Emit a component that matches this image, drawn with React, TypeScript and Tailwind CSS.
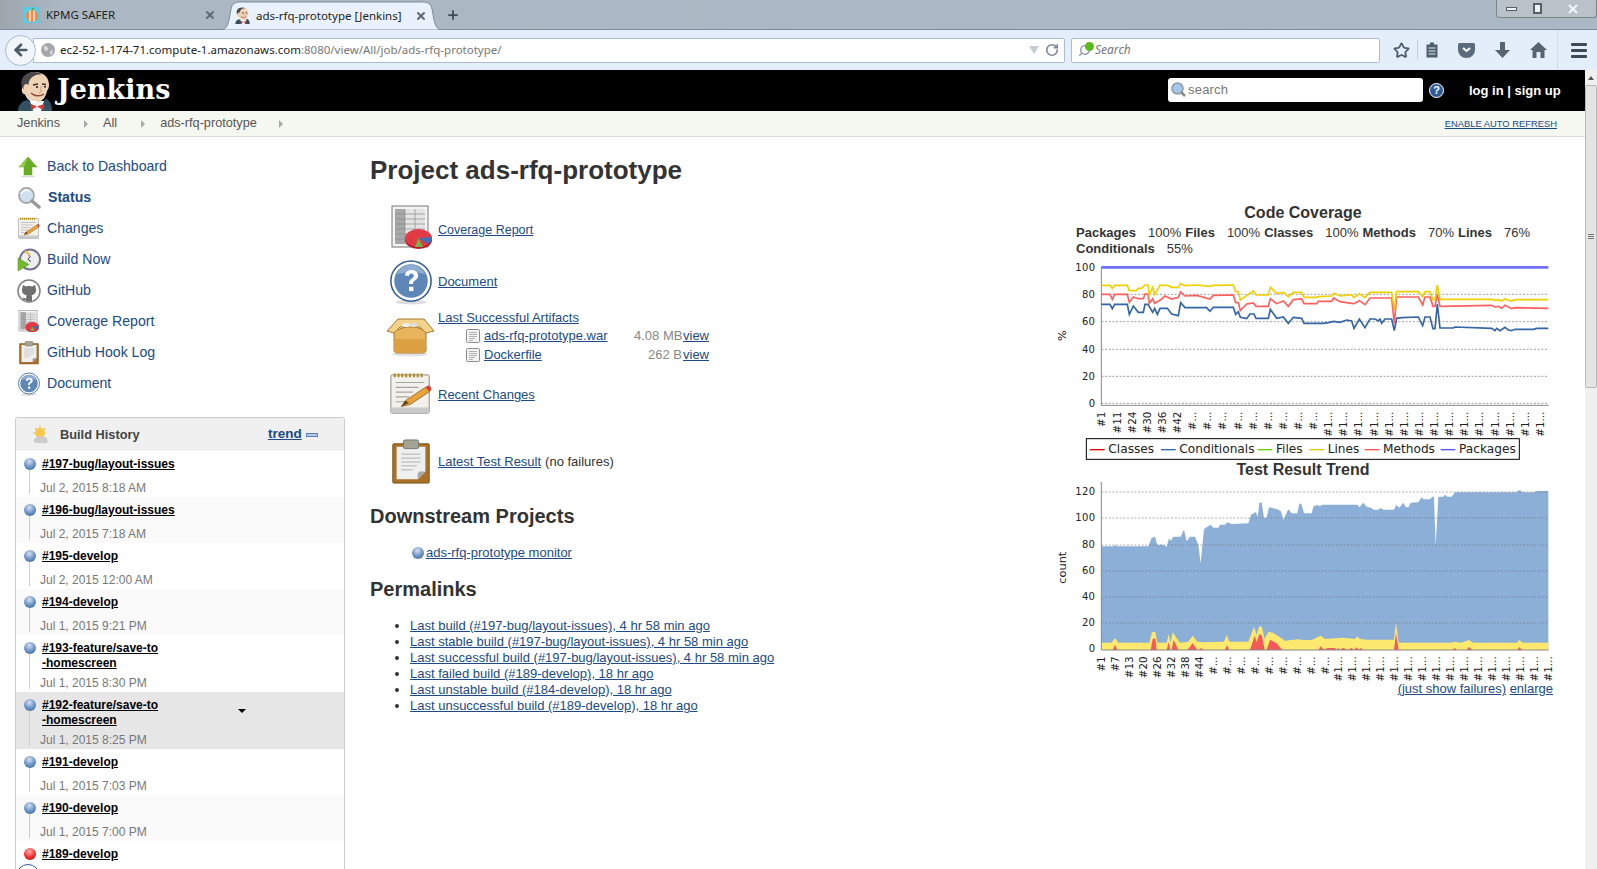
import React from 'react';
import { ArrowLeft, Plus, RotateCw, Search, Star, X } from 'lucide-react';

const sideLinks = [
  { label: 'Back to Dashboard', icon: 'up' },
  { label: 'Status', icon: 'search', bold: true },
  { label: 'Changes', icon: 'notepad' },
  { label: 'Build Now', icon: 'clock' },
  { label: 'GitHub', icon: 'github' },
  { label: 'Coverage Report', icon: 'coverage' },
  { label: 'GitHub Hook Log', icon: 'clipboard' },
  { label: 'Document', icon: 'help' },
];

const builds = [
  { name: '#197-bug/layout-issues', date: 'Jul 2, 2015 8:18 AM' },
  { name: '#196-bug/layout-issues', date: 'Jul 2, 2015 7:18 AM', alt: true },
  { name: '#195-develop', date: 'Jul 2, 2015 12:00 AM' },
  { name: '#194-develop', date: 'Jul 1, 2015 9:21 PM', alt: true },
  { name: '#193-feature/save-to\n-homescreen', date: 'Jul 1, 2015 8:30 PM' },
  { name: '#192-feature/save-to\n-homescreen', date: 'Jul 1, 2015 8:25 PM', hover: true },
  { name: '#191-develop', date: 'Jul 1, 2015 7:03 PM' },
  { name: '#190-develop', date: 'Jul 1, 2015 7:00 PM', alt: true },
  { name: '#189-develop', date: '', failed: true },
];

const permalinks = [
  'Last build (#197-bug/layout-issues), 4 hr 58 min ago',
  'Last stable build (#197-bug/layout-issues), 4 hr 58 min ago',
  'Last successful build (#197-bug/layout-issues), 4 hr 58 min ago',
  'Last failed build (#189-develop), 18 hr ago',
  'Last unstable build (#184-develop), 18 hr ago',
  'Last unsuccessful build (#189-develop), 18 hr ago',
];

// chart points, traced from the picture at 3x
const linesY = '154,271 180,271 187,280 194,271 232,271 238,287 258,287 265,280 275,280 285,270 294,270 298,300 308,277 314,298 330,271 352,271 365,277 385,277 392,266 405,272 440,270 480,274 490,271 550,270 557,290 565,290 571,315 590,302 610,288 618,300 655,300 661,277 680,295 700,292 715,305 730,292 755,292 762,307 800,307 805,305 845,303 851,295 870,303 905,299 912,308 928,296 945,308 960,292 1025,292 1033,345 1040,290 1105,290 1118,305 1125,290 1140,290 1149,315 1155,315 1162,270 1170,313 1325,313 1335,316 1345,314 1355,318 1365,312 1385,318 1395,314 1495,314';
const methodsY = '154,298 180,298 187,313 194,298 232,298 238,322 250,306 265,311 280,311 285,297 294,297 298,325 308,311 314,325 330,316 345,303 365,312 385,307 392,291 405,303 440,301 480,312 490,301 550,300 557,323 565,323 571,347 590,327 610,324 618,334 655,334 661,311 680,326 700,318 715,334 730,314 755,312 762,326 800,326 805,319 845,319 851,309 870,320 905,325 912,326 928,317 945,329 960,309 1025,309 1033,385 1040,306 1105,306 1118,330 1125,306 1140,306 1149,334 1155,334 1162,297 1170,334 1325,331 1335,336 1345,334 1355,340 1365,331 1385,341 1395,338 1495,340';
const condY = '154,328 180,328 187,341 194,328 232,328 238,358 250,333 265,352 280,352 285,328 294,328 308,352 314,340 322,358 330,340 352,340 365,357 385,362 392,323 405,338 470,338 480,349 490,337 550,337 557,358 565,350 571,367 590,371 600,357 612,357 618,370 655,370 661,343 680,370 700,366 715,385 730,367 755,370 762,385 820,385 835,383 851,379 870,382 890,375 905,378 912,400 928,372 945,398 960,372 975,372 985,378 990,372 995,385 1005,372 1025,372 1033,407 1040,370 1055,368 1105,366 1118,392 1125,366 1140,366 1149,401 1155,401 1162,327 1170,399 1210,399 1215,396 1325,400 1335,407 1340,400 1350,407 1365,397 1375,405 1385,407 1395,403 1450,403 1460,400 1495,400';
const blueTop = '154,287 190,287 195,283 200,287 295,287 305,262 315,258 322,282 340,282 350,288 357,263 362,270 370,258 392,258 402,237 410,272 420,258 435,258 445,283 452,338 462,235 482,222 490,231 505,231 510,222 525,222 532,215 545,220 595,218 603,192 618,184 623,200 628,157 635,155 642,202 650,200 657,170 680,175 693,182 700,208 715,176 725,188 742,188 748,158 755,162 762,188 785,188 790,168 800,163 810,166 818,162 922,162 928,170 940,156 950,168 965,172 970,177 985,177 992,172 1000,177 1032,177 1038,163 1048,171 1060,156 1068,170 1075,170 1082,156 1105,155 1115,140 1120,146 1140,146 1147,138 1152,138 1157,285 1165,138 1180,138 1185,132 1192,138 1205,138 1215,125 1400,125 1408,118 1418,125 1455,125 1460,121 1495,121';
const yellowTop = '154,576 185,576 195,562 205,576 298,576 306,545 316,543 322,576 350,576 356,550 362,576 368,545 378,560 390,576 415,573 428,555 442,573 460,575 522,573 530,553 538,573 595,573 612,528 620,553 628,525 636,530 644,565 655,543 668,546 690,560 705,570 745,566 760,568 785,568 812,555 825,565 880,561 915,565 922,557 930,565 950,567 1032,567 1038,515 1046,576 1205,576 1214,573 1235,576 1256,568 1270,576 1400,576 1408,568 1418,576 1495,576';
const redTop = '154,598 188,598 195,582 202,598 302,598 308,565 316,563 320,598 350,598 356,574 361,598 365,598 371,567 385,598 412,598 428,578 442,598 447,598 453,592 460,598 525,598 531,583 537,598 600,598 614,555 620,575 628,550 636,555 644,598 650,598 660,567 680,578 697,598 805,598 812,587 822,598 832,592 855,592 860,598 865,592 870,598 880,591 892,598 905,592 912,598 920,590 927,598 932,592 940,598 1032,598 1038,547 1046,598 1208,598 1214,592 1220,598 1250,598 1256,589 1268,598 1402,598 1408,589 1416,598';

function Ball({ failed }: { failed?: boolean }) {
  const tone = failed
    ? 'bg-[radial-gradient(circle_at_45%_30%,#ffb0b0,#ee2b2b_55%,#b81818)]'
    : 'bg-[radial-gradient(circle_at_45%_30%,#d5e0ef,#6f95c6_50%,#2f5c96)]';
  return <span className={`block shrink-0 rounded-full w-[12px] h-[12px] ${tone}`} />;
}

function HelpIcon({ size }: { size: number }) {
  return (
    <svg width={size} height={size} viewBox="0 0 48 48">
      <ellipse cx="24" cy="45" rx="16" ry="2.500" fill="#ddd" />
      <circle cx="24" cy="23" r="21" fill="#fff" stroke="#2f5c96" strokeWidth="1.600" />
      <circle cx="24" cy="23" r="17.500" fill="#5e87b8" />
      <path d="M24 6a17 17 0 0 1 15 10c-8-3-20-3-30 0A17 17 0 0 1 24 6z" fill="#8fadd0" />
      <path d="M17.500 17c1-4 3.500-5.500 7-5.500 4 0 7 2.500 7 6 0 4.500-5.500 4.500-5.500 8.500h-4c-.5-5.500 5-5.500 5-8.500 0-1.500-1-2.500-2.500-2.500s-2.500 1-3 3z" fill="#fff" />
      <rect x="22" y="29" width="4.500" height="4.500" fill="#fff" />
    </svg>
  );
}

function CoverageIcon({ size }: { size: number }) {
  return (
    <svg width={size} height={size} viewBox="0 0 48 48">
      <rect x="4" y="1" width="36" height="41" fill="#f4f4f4" stroke="#777" strokeWidth="1" />
      <rect x="7" y="4" width="30" height="35" fill="#e4e4e4" />
      <rect x="7" y="4" width="10" height="35" fill="#a8a8a8" />
      <path d="M7 9h30M7 14h30M7 19h30M7 24h30M7 29h30M7 34h30M17 4v35M27 4v35" stroke="#8a8a8a" strokeWidth=".7" />
      <ellipse cx="30.500" cy="35" rx="13.500" ry="9" fill="#b91c28" />
      <ellipse cx="30.500" cy="33" rx="13.500" ry="9" fill="#e23b45" />
      <path d="M30.500 33l13-1c.4 3-1 6-3.500 7z" fill="#3f6fb5" />
      <path d="M30.500 33l-3.500 9h8z" fill="#74b743" />
    </svg>
  );
}

function NotepadIcon({ size }: { size: number }) {
  return (
    <svg width={size} height={size} viewBox="0 0 48 48">
      <rect x="3" y="3" width="40" height="40" rx="1.500" fill="#f2f1ec" stroke="#888" strokeWidth="1" />
      <rect x="3" y="37" width="40" height="6" fill="#c9c9c9" />
      <path d="M7 1.500v4M11 1.500v4M15 1.500v4M19 1.500v4M23 1.500v4M27 1.500v4M31 1.500v4M35 1.500v4" stroke="#b08a14" strokeWidth="2" />
      <path d="M8 11h30M8 16h24M8 21h18M8 26h14M8 31h10" stroke="#a5a5a5" strokeWidth="1.200" />
      <path d="M14 36l4-6 21-14 5 4-21 14z" fill="#e8a33b" stroke="#8b5d16" strokeWidth=".8" />
      <path d="M39 16l3-2c2 0 4 3 3 5l-2 1z" fill="#d93a3a" />
      <path d="M14 36l4-6 4 2z" fill="#5a4020" />
    </svg>
  );
}

function ClipboardIcon({ size }: { size: number }) {
  return (
    <svg width={size} height={size} viewBox="0 0 48 48">
      <rect x="5" y="5" width="38" height="41" rx="1" fill="#a9722a" stroke="#7b5118" strokeWidth="1" />
      <path d="M9 8h30v26l-8 8H9z" fill="#efefef" />
      <path d="M31 42l8-8h-6l-2 2z" fill="#a8a8a8" />
      <path d="M14 16h20M14 20h20M14 24h20M14 28h16M14 32h12" stroke="#c6c6c6" strokeWidth="1.500" />
      <rect x="16" y="1" width="16" height="9" rx="2" fill="#a3a396" stroke="#74746a" strokeWidth="1" />
    </svg>
  );
}

function BoxIcon() {
  return (
    <svg width="48" height="40" viewBox="0 0 48 40">
      <ellipse cx="24" cy="37" rx="18" ry="2.500" fill="#e2e2e2" />
      <path d="M8 14l17-6 15 6v20l-2 2H10l-2-2z" fill="#e8b45c" stroke="#a87a2a" strokeWidth="1" />
      <path d="M8 22h32v12l-2 2H10l-2-2z" fill="#dc9f42" />
      <path d="M1 14L12 2h26l10 12-8 2-6-6H14l-6 6z" fill="#f3d28c" stroke="#a87a2a" strokeWidth="1" />
      <ellipse cx="20" cy="8" rx="4" ry="2" fill="#eee" />
      <ellipse cx="28" cy="8" rx="4" ry="2" fill="#ddd" />
    </svg>
  );
}

function FileIcon() {
  return (
    <svg width="14" height="14" viewBox="0 0 14 14" className="shrink-0">
      <rect x=".5" y=".5" width="13" height="13" rx="1" fill="#f4f4f4" stroke="#8c8c8c" />
      <path d="M3 3.500h8M3 5.500h8M3 7.500h8M3 9.500h6M3 11.500h4" stroke="#b0b0b0" strokeWidth="1" />
    </svg>
  );
}

function SideIcon({ name }: { name: string }) {
  if (name === 'up') {
    return (
      <svg width="22" height="22" viewBox="0 0 22 22">
        <path d="M11 1l9 10h-5v8H7v-8H2z" fill="#67ad24" stroke="#5c9a20" strokeWidth=".5" />
        <path d="M11 1L2 11h5z" fill="#8fce45" />
        <ellipse cx="11" cy="20.500" rx="7" ry="1" fill="#ddd" />
      </svg>
    );
  }
  if (name === 'search') {
    return (
      <svg width="24" height="24" viewBox="0 0 24 24">
        <circle cx="9.500" cy="9.500" r="7.500" fill="#cfe0f2" stroke="#a6a6a6" strokeWidth="1.800" />
        <path d="M4 8a6 6 0 0 1 9-3" stroke="#fff" strokeWidth="1.500" fill="none" />
        <path d="M15 15l7 6" stroke="#999" strokeWidth="3.500" strokeLinecap="round" />
      </svg>
    );
  }
  if (name === 'notepad') return <NotepadIcon size={24} />;
  if (name === 'clock') {
    return (
      <svg width="24" height="24" viewBox="0 0 24 24">
        <circle cx="13" cy="11.500" r="10" fill="#eee" stroke="#77708f" strokeWidth="2" />
        <path d="M9 3.500l4 5-2 3 3 2" stroke="#444" strokeWidth="1" fill="none" />
        <path d="M8 3l5 4" stroke="#e9c33c" strokeWidth="2" />
        <path d="M1 10l11 6.500L1 23z" fill="#74bb2c" stroke="#4e8e1c" strokeWidth=".5" />
      </svg>
    );
  }
  if (name === 'github') {
    return (
      <svg width="24" height="24" viewBox="0 0 24 24">
        <circle cx="12" cy="12" r="11" fill="#fff" stroke="#808080" strokeWidth="1.500" />
        <path d="M5 10l1-4 3 1.500c2-.6 4-.6 6 0L18 6l1 4c.6 3-1.500 6-4.500 6.300.5.500.5 1.500.5 2.500v3.500H9V21c-2 .3-3-.5-3.500-2H7.800c.5.800 1 1 1.300.6 0-1.500.2-2.600.6-3.300C6.500 16 4.500 13 5 10z" fill="#707070" />
      </svg>
    );
  }
  if (name === 'coverage') return <CoverageIcon size={24} />;
  if (name === 'clipboard') return <ClipboardIcon size={24} />;
  return <HelpIcon size={24} />;
}

function JenkinsHead({ size }: { size: number }) {
  return (
    <svg width={size} height={size} viewBox="0 0 40 40">
      <path d="M3 40c0-6 4-10 9-11l5 2h10l4-3c4 1 6 6 6 12z" fill="#335061" />
      <path d="M15 30h14l-3 10h-8z" fill="#f4f4f4" />
      <path d="M16 33l6 2.500-6 4zM29 33l-7 2.500 7 4z" fill="#d33833" />
      <path d="M7 14C7 6 12 1 20 1c8 0 14 5 14 13 0 3-1 4-2 6-1 5-4 11-10 11-5 0-8-3-10-7-3 0-6-2-5-7z" fill="#f0d2b4" />
      <path d="M7 16C4 8 10 1 19 1c3 0 6 .8 8 2.200C20 3 14 6 13.500 14c-2-2-5-1-5 2.500l.5 2z" fill="#49484a" />
      <path d="M18 14l5-1M27 13l4 .5" stroke="#3b3330" strokeWidth="1.400" />
      <circle cx="22" cy="16" r="1.100" fill="#222" />
      <path d="M29 15.500l2 .5" stroke="#222" strokeWidth="1.300" />
      <path d="M26 15v6l-2 1" stroke="#c99c80" strokeWidth="1" fill="none" />
      <path d="M16 22c3 3 9 4 13 1" stroke="#8c4a38" strokeWidth="1.400" fill="none" />
      <path d="M11 24c2 4 6 7 11 7" stroke="#fff" strokeWidth="1.600" fill="none" />
    </svg>
  );
}

function Sep() {
  return <span className="inline-block w-0 h-0 border-y-[4px] border-y-transparent border-l-[4px] border-l-[#aaa]" />;
}

function TabShape() {
  return (
    <svg className="absolute -left-[5px] -right-[5px] top-0 w-[225px] h-full" viewBox="0 0 225 29" preserveAspectRatio="none">
      <path d="M0 29c6 0 8-2 10-10l2-11c1-5 4-7 9-7h183c5 0 8 2 9 7l2 11c2 8 4 10 10 10z" fill="#e9f1fc" stroke="#7d8a99" strokeWidth="1" />
    </svg>
  );
}

function BrowserChrome() {
  return (
    <div className="shrink-0">
      {/* tabs */}
      <div className="h-[30px] flex items-end bg-[linear-gradient(90deg,#9ea6ad_0,#abb7c3_60px,#aab8c6_100%)] border-b border-[#7d8a99] text-[#222] font-['Noto_Sans',sans-serif] relative">
        <div className="w-[224px] h-[28px] flex items-center pl-[24px] pr-[8px]">
          <svg width="16" height="16" viewBox="0 0 16 16" className="shrink-0">
            <rect width="16" height="16" fill="#58cbe6" />
            <circle cx="8" cy="9" r="6" fill="#f08a4b" />
            <path d="M6 3.500v11M10 3.500v11" stroke="#fde7d5" strokeWidth="1.500" />
            <path d="M8 3l2-2" stroke="#6a9e2a" strokeWidth="1.500" />
          </svg>
          <span className="ml-[6px] flex-1 text-[11.500px]">KPMG SAFER</span>
          <X size={12} strokeWidth={4} className="text-[#5f6b78]" />
        </div>
        <div className="relative w-[215px] h-[29px] -mb-px flex items-center pl-[10px] pr-[12px]">
          <TabShape />
          <span className="relative"><JenkinsHead size={17} /></span>
          <span className="relative ml-[5px] flex-1 text-[11.500px] whitespace-nowrap">ads-rfq-prototype [Jenkins]</span>
          <X size={12} strokeWidth={4} className="relative text-[#5f6b78]" />
        </div>
        <Plus size={14} strokeWidth={3} className="ml-[7px] mb-[7px] text-[#3f4b59]" />
        <div className="absolute right-0 top-0 w-[101px] h-[18px] flex items-center rounded-b-[4px] border border-t-0 border-[#7d8486] bg-[#b9c2c9]">
          <span className="w-[28px] flex justify-center"><span className="w-[11px] h-[4px] bg-[#eef2f5] border border-[#56606a]" /></span>
          <span className="w-[24px] flex justify-center"><span className="w-[9px] h-[11px] bg-[#eef2f5] border-2 border-[#56606a]" /></span>
          <span className="flex-1 flex justify-center"><X size={14} strokeWidth={3.500} className="text-[#f4f6f8]" /></span>
        </div>
      </div>
      {/* location bar */}
      <div className="h-[40px] flex items-center bg-[#e4eefa] relative text-[#4e5d6c]">
        <span className="ml-[5px] w-[31px] h-[31px] rounded-full bg-[#f2f6fb] border border-[#a9bace] flex items-center justify-center z-10">
          <ArrowLeft size={18} strokeWidth={3.500} className="text-[#4a5868]" />
        </span>
        <div className="-ml-[3px] w-[1032px] h-[25px] bg-white border border-[#aebdcd] rounded-r-[2px] flex items-center pl-[7px] pr-[5px]">
          <svg width="14" height="14" viewBox="0 0 14 14" className="shrink-0">
            <circle cx="7" cy="7" r="7" fill="#a3a7ab" />
            <path d="M3 3c2-1 3 1 4 2s-1 3-2 3-2-2-2-5zM9 8l3-1-1 4-2 1z" fill="#d8dadc" />
          </svg>
          <span className="ml-[5px] text-[11.500px] font-['Noto_Sans',sans-serif] whitespace-nowrap">
            <span className="text-[#222]">ec2-52-1-174-71.compute-1.amazonaws.com</span>
            <span className="text-[#777]">:8080/view/All/job/ads-rfq-prototype/</span>
          </span>
          <span className="ml-auto w-0 h-0 border-x-[5px] border-x-transparent border-t-[8px] border-t-[#c4ccd4]" />
          <RotateCw size={14} strokeWidth={2.800} className="ml-[6px] text-[#7c8893]" />
        </div>
        <div className="ml-[6px] w-[309px] h-[25px] bg-white border border-[#aebdcd] rounded-[2px] flex items-center pl-[6px] relative">
          <Search size={13} strokeWidth={2.500} className="text-[#8893a0] -scale-x-100" />
          <span className="absolute left-[13px] top-[3px] w-[9px] h-[9px] rounded-full bg-[#5cb81f]" />
          <span className="ml-[4px] text-[12px] italic text-[#777] font-['Noto_Sans',sans-serif]">Search</span>
        </div>
        <div className="ml-[7px] w-[28px] flex justify-center"><Star size={17} strokeWidth={2.500} /></div>
        <span className="ml-[2px] w-px h-[20px] bg-[#c4d0dc]" />
        <div className="w-[28px] flex justify-center">
          <svg width="14" height="16" viewBox="0 0 14 16"><path d="M1.500 2.500h3.500v-2h4v2h3.500v13h-11z" fill="#4e5d6c" /><path d="M3.500 6h7M3.500 9h7M3.500 12h7" stroke="#e4eefa" strokeWidth="1.200" /></svg>
        </div>
        <div className="ml-[6px] w-[28px] flex justify-center">
          <svg width="17" height="15" viewBox="0 0 17 15"><path d="M0 1.500Q0 0 1.500 0h14Q17 0 17 1.500V7a8.500 8 0 0 1-17 0z" fill="#5c6b7c" /><path d="M5 5l3.500 3L12 5" stroke="#fff" strokeWidth="2" fill="none" /></svg>
        </div>
        <div className="ml-[8px] w-[28px] flex justify-center">
          <svg width="15" height="16" viewBox="0 0 15 16"><path d="M5 0h5v8h5l-7.500 8L0 8h5z" fill="#56656f" /></svg>
        </div>
        <div className="ml-[8px] w-[28px] flex justify-center">
          <svg width="17" height="16" viewBox="0 0 17 16"><path d="M8.500 0L17 8h-2.500v8h-4v-6h-4v6h-4V8H0z" fill="#56656f" /></svg>
        </div>
        <span className="ml-[5px] w-px h-full bg-[#d0dbe6]" />
        <div className="ml-[11px] w-[20px] flex flex-col items-center gap-[3px]">
          <span className="w-[16px] h-[3px] rounded-[1px] bg-[#3d4a58]" />
          <span className="w-[16px] h-[3px] rounded-[1px] bg-[#3d4a58]" />
          <span className="w-[16px] h-[3px] rounded-[1px] bg-[#3d4a58]" />
        </div>
      </div>
    </div>
  );
}

function Sidebar() {
  return (
    <div className="w-[370px] shrink-0 pl-[15px] pr-[25px] pt-[14px]">
      {sideLinks.map((l) => (
        <div key={l.label} className="h-[31px] flex items-center">
          <span className="w-[32px] pl-[2px] flex items-center"><SideIcon name={l.icon} /></span>
          <a className={`text-[14.100px] text-[#204a87] ${l.bold ? 'font-bold ml-px' : ''}`}>{l.label}</a>
        </div>
      ))}
      <div className="mt-[18px] border border-b-0 border-[#cccccc] rounded-t-[3px]">
        <div className="h-[33px] bg-[#f0f0f0] flex items-center pl-[16px] relative">
          <svg width="18" height="18" viewBox="0 0 18 18">
            <circle cx="8" cy="7" r="5" fill="#f5c84a" />
            <path d="M8 0v2M1 7h2M3 2l1.500 1.500M13 2l-1.500 1.500" stroke="#f0b93a" strokeWidth="1.200" />
            <path d="M4 17c-3 0-3-5 0-5 1-2 4-3 6-1 4-1 7 2 5 6z" fill="#ccc" />
          </svg>
          <span className="ml-[10px] text-[12.800px] font-bold text-[#444]">Build History</span>
          <a className="absolute left-[252px] text-[13.500px] font-bold text-[#204a87] underline">trend</a>
          <span className="absolute left-[290px] top-[15px] w-[12px] h-[4px] bg-[#b9cbe2] border border-[#5a80b3]" />
        </div>
        {builds.map((b) => (
          <div key={b.name} className={`relative flex pl-[3px] ${b.hover ? 'bg-[#e6e6e6]' : b.alt ? 'bg-[#fafafa]' : 'bg-white'}`}>
            <div className="w-[23px] pt-[7px] flex flex-col items-center shrink-0 pr-[2px]">
              <Ball failed={b.failed} />
              {b.date && <span className="w-px flex-1 bg-[#cccccc] mb-[3px]" />}
            </div>
            <div className="pt-[6px]">
              <a className="block text-[12px] leading-[15px] font-bold text-black underline whitespace-pre-line">{b.name}</a>
              {b.date ? (
                <div className={`-ml-[2px] text-[12px] leading-[15px] text-[#777] ${b.name.includes('\n') ? 'mt-[5px] mb-px' : 'mt-[9px] mb-px'}`}>{b.date}</div>
              ) : (
                <div className="h-[26px]" />
              )}
            </div>
            {b.hover && <span className="absolute left-[222px] top-[17px] w-0 h-0 border-x-[4px] border-x-transparent border-t-[4px] border-t-black" />}
            {b.failed && <span className="absolute left-0 top-[23px] w-[24px] h-[24px] rounded-full border border-[#2f5c96] bg-white" />}
          </div>
        ))}
      </div>
    </div>
  );
}

function ProjectColumn() {
  const link = 'text-[#204a87] underline';
  return (
    <div className="w-[705px] shrink-0 text-[13px]">
      <h1 className="text-[26px] leading-[30px] font-bold text-[#333] mt-[18px]">Project ads-rfq-prototype</h1>
      <div className="mt-[20px] h-[50px] flex items-center">
        <span className="w-[68px] pl-[18px] -mt-[2px]"><CoverageIcon size={48} /></span>
        <a className={`${link} text-[12.500px]`}>Coverage Report</a>
      </div>
      <div className="mt-[2px] h-[50px] flex items-center">
        <span className="w-[68px] pl-[18px]"><HelpIcon size={46} /></span>
        <a className={link}>Document</a>
      </div>
      <div className="mt-[2px] h-[54px] flex">
        <span className="w-[68px] pl-[16px] pt-[8px]"><BoxIcon /></span>
        <div>
          <a className={`${link} block leading-[17px]`}>Last Successful Artifacts</a>
          <div className="flex items-center h-[19px]">
            <span className="ml-[28px]"><FileIcon /></span>
            <a className={`${link} ml-[4px] w-[150px]`}>ads-rfq-prototype.war</a>
            <span className="w-[48px] text-right text-[#888] whitespace-nowrap">4.08 MB</span>
            <a className={`${link} ml-px`}>view</a>
          </div>
          <div className="flex items-center h-[19px]">
            <span className="ml-[28px]"><FileIcon /></span>
            <a className={`${link} ml-[4px] w-[150px]`}>Dockerfile</a>
            <span className="w-[48px] text-right text-[#888] whitespace-nowrap">262 B</span>
            <a className={`${link} ml-px`}>view</a>
          </div>
        </div>
      </div>
      <div className="mt-[7px] h-[50px] flex items-center">
        <span className="w-[68px] pl-[18px]"><NotepadIcon size={46} /></span>
        <a className={link}>Recent Changes</a>
      </div>
      <div className="mt-[17px] h-[50px] flex items-center">
        <span className="w-[68px] pl-[18px]"><ClipboardIcon size={46} /></span>
        <a className={link}>Latest Test Result</a>
        <span className="ml-[4px] text-[#333]">(no failures)</span>
      </div>
      <h2 className="mt-[17px] text-[20px] leading-[24px] font-bold text-[#333]">Downstream Projects</h2>
      <div className="mt-[17px] ml-[42px] h-[16px] flex items-center gap-[2px]">
        <Ball />
        <a className={link}>ads-rfq-prototype monitor</a>
      </div>
      <h2 className="mt-[16px] text-[20px] leading-[24px] font-bold text-[#333]">Permalinks</h2>
      <ul className="mt-[17px] pl-[31px] list-disc list-outside ml-[9px]">
        {permalinks.map((p) => (
          <li key={p} className="h-[16px] leading-[16px] text-[#333]">
            <a className={link}>{p}</a>
          </li>
        ))}
      </ul>
    </div>
  );
}

function chartTick(label: string, x: number, top: number) {
  return (
    <text key={`${label}-${x}`} transform={`translate(${x + 11} ${top}) rotate(-90)`} textAnchor="end" fontSize="31" fill="#222">
      {label}
    </text>
  );
}

function CoverageChart() {
  const xs = [155, 202, 247, 292, 337, 382, 427, 472, 517, 565, 610, 655, 700, 745, 790, 835, 880, 925, 972, 1018, 1063, 1108, 1153, 1198, 1243, 1288, 1335, 1382, 1427, 1472];
  const first = ['#1', '#11', '#24', '#30', '#36', '#42'];
  const legend = [
    ['Classes', '#e60000', 120, 175],
    ['Conditionals', '#3465a4', 333, 388],
    ['Files', '#66cc00', 623, 678],
    ['Lines', '#e6c800', 778, 833],
    ['Methods', '#ff5555', 944, 999],
    ['Packages', '#5555ff', 1172, 1227],
  ] as const;
  return (
    <svg width="520" height="210" viewBox="0 180 1560 630" className="block font-['DejaVu_Sans',sans-serif]">
      {[298, 380, 463, 544, 625].map((y) => (
        <path key={y} d={`M154 ${y}H1495`} stroke="#8a8a8a" strokeWidth="2.500" strokeDasharray="6 5" />
      ))}
      <path d="M154 217V631H1496" stroke="#888" strokeWidth="3" fill="none" />
      {[[217, '100'], [298, '80'], [380, '60'], [463, '40'], [544, '20'], [625, '0']].map(([y, t]) => (
        <text key={t} x="136" y={Number(y) + 10} textAnchor="end" fontSize="30" fill="#222" letterSpacing="1">{t}</text>
      ))}
      <text transform="translate(49 422) rotate(-90)" textAnchor="middle" fontSize="34" fill="#222">%</text>
      <polyline points={condY} fill="none" stroke="#3465a4" strokeWidth="5" />
      <polyline points={methodsY} fill="none" stroke="#ff5f5f" strokeWidth="5" />
      <polyline points={linesY} fill="none" stroke="#f0d000" strokeWidth="5" />
      <path d="M154 217H1495" stroke="#5555ff" strokeWidth="8" strokeOpacity=".85" />
      {xs.map((x, i) => chartTick(first[i] ?? (i < 15 ? '#...' : '#1...'), x, 650))}
      <rect x="109" y="731" width="1299" height="62" fill="#fff" stroke="#000" strokeWidth="3" />
      {legend.map(([name, color, lx, tx]) => (
        <g key={name}>
          <path d={`M${lx} 764h44`} stroke={color} strokeWidth="4" />
          <text x={tx} y="774" fontSize="36.500" fill="#222">{name}</text>
        </g>
      ))}
    </svg>
  );
}

function TrendChart() {
  const xs = [155, 197, 238, 280, 322, 364, 406, 448, 490, 532, 574, 616, 658, 700, 742, 784, 825, 865, 907, 949, 991, 1033, 1075, 1117, 1159, 1201, 1243, 1285, 1327, 1369, 1411, 1453, 1495];
  const first = ['#1', '#7', '#13', '#20', '#26', '#32', '#38', '#44'];
  return (
    <svg width="520" height="202" viewBox="0 85 1560 606" className="block font-['DejaVu_Sans',sans-serif]">
      <polygon points={`154,598 ${blueTop} 1495,598`} fill="#8cafd8" />
      <polygon points={`154,598 ${yellowTop} 1495,598`} fill="#fde96e" />
      <polygon points={`154,598 ${redTop} 1495,598`} fill="#f55a5a" />
      {[124, 202, 283, 361, 439, 517].map((y) => (
        <path key={y} d={`M154 ${y}H1495`} stroke="#777" strokeOpacity=".7" strokeWidth="2.500" strokeDasharray="6 5" />
      ))}
      <path d="M154 94V598H1496" stroke="#888" strokeWidth="3" fill="none" />
      {[[124, '120'], [202, '100'], [283, '80'], [361, '60'], [439, '40'], [517, '20'], [595, '0']].map(([y, t]) => (
        <text key={t} x="136" y={Number(y) + 10} textAnchor="end" fontSize="30" fill="#222" letterSpacing="1">{t}</text>
      ))}
      <text transform="translate(49 351) rotate(-90)" textAnchor="middle" fontSize="34" fill="#222">count</text>
      {xs.map((x, i) => chartTick(first[i] ?? (i < 17 ? '#...' : '#1...'), x, 617))}
    </svg>
  );
}

function ChartsColumn() {
  const summary = [
    ['Packages', '100%'],
    ['Files', '100%'],
    ['Classes', '100%'],
    ['Methods', '70%'],
    ['Lines', '76%'],
  ];
  return (
    <div className="w-[495px] shrink-0 text-[#333]">
      <h3 className="mt-[66px] w-[456px] text-center text-[16px] leading-[20px] font-bold text-[#333]">Code Coverage</h3>
      <div className="mt-[2px] pl-px text-[13px] leading-[16px]">
        <div className="flex">
          {summary.map(([name, pct]) => (
            <React.Fragment key={name}>
              <b className="mr-[12px]">{name}</b>
              <span className="mr-[4px]">{pct}</span>
            </React.Fragment>
          ))}
        </div>
        <div className="flex">
          <b className="mr-[12px]">Conditionals</b>
          <span>55%</span>
        </div>
      </div>
      <div className="-ml-[25px] -mt-[2px]"><CoverageChart /></div>
      <h3 className="w-[456px] text-center text-[16px] leading-[20px] font-bold text-[#333] -mt-[5px]">Test Result Trend</h3>
      <div className="-ml-[25px] -mt-[1px]"><TrendChart /></div>
      <div className="w-[478px] text-right text-[13px] text-[#204a87] leading-[16px]">
        <a className="underline">(just show failures)</a> <a className="underline">enlarge</a>
      </div>
    </div>
  );
}

const App: React.FC = () => {
  return (
    <div className="w-[1597px] h-[869px] overflow-hidden flex flex-col bg-white font-['Liberation_Sans',Arial,sans-serif]">
      <BrowserChrome />
      <div className="flex flex-1 min-h-0">
        <div className="flex-1 min-w-0 flex flex-col">
          {/* Header */}
          <header className="h-[41px] shrink-0 bg-black flex items-center relative">
            <span className="ml-[15px] w-[40px] self-end flex"><JenkinsHead size={40} /></span>
            <span className="ml-[2px] w-[1111px] font-['DejaVu_Serif',serif] text-[27px] font-bold text-white leading-none -mt-[3px]">Jenkins</span>
            <div className="w-[255px] h-[24px] -mt-[2px] bg-white rounded-[3px] flex items-center pl-[3px] gap-[2px]">
              <svg width="15" height="15" viewBox="0 0 15 15" className="shrink-0">
                <circle cx="6.500" cy="6.500" r="5.500" fill="#a7c7ea" stroke="#8a9aa8" strokeWidth="1.500" />
                <path d="M10 10l4 4" stroke="#8a8a8a" strokeWidth="2.500" />
              </svg>
              <span className="text-[13px] text-[#777] tracking-[0.2px]">search</span>
            </div>
            <span className="ml-[6px] w-[15px] h-[15px] rounded-full bg-[#2f5c96] border border-white text-white text-[11px] leading-[13px] font-bold text-center">?</span>
            <span className="ml-[25px] text-[13px] font-bold text-white whitespace-nowrap">log in | sign up</span>
          </header>
          {/* Breadcrumb */}
          <div className="h-[26px] shrink-0 bg-[#f5f8f0] border-b border-[#dcdcdc] flex items-center pl-[17px] pt-px text-[12.700px] text-[#555]">
            <span>Jenkins</span>
            <span className="ml-[24px] flex"><Sep /></span>
            <span className="ml-[15px]">All</span>
            <span className="ml-[24px] flex"><Sep /></span>
            <span className="ml-[15px]">ads-rfq-prototype</span>
            <span className="ml-[22px] flex"><Sep /></span>
            <a className="ml-auto mr-[28px] text-[9.400px] text-[#204a87] underline">ENABLE AUTO REFRESH</a>
          </div>
          <div className="flex flex-1 min-h-0 overflow-hidden">
            <Sidebar />
            <ProjectColumn />
            <ChartsColumn />
          </div>
        </div>
        {/* page scrollbar */}
        <div className="w-[12px] shrink-0 bg-[#f0f0f0] flex flex-col">
          <div className="h-[15px] flex items-center justify-center"><span className="w-0 h-0 border-x-[3px] border-x-transparent border-b-[4px] border-b-[#555]" /></div>
          <div className="h-[303px] bg-[#e4e4e4] border border-[#b8b8b8] rounded-[2px] flex flex-col items-center justify-center gap-px">
            <span className="w-[6px] h-px bg-[#777]" />
            <span className="w-[6px] h-px bg-[#777]" />
            <span className="w-[6px] h-px bg-[#777]" />
          </div>
        </div>
      </div>
    </div>
  );
};

export default App;
